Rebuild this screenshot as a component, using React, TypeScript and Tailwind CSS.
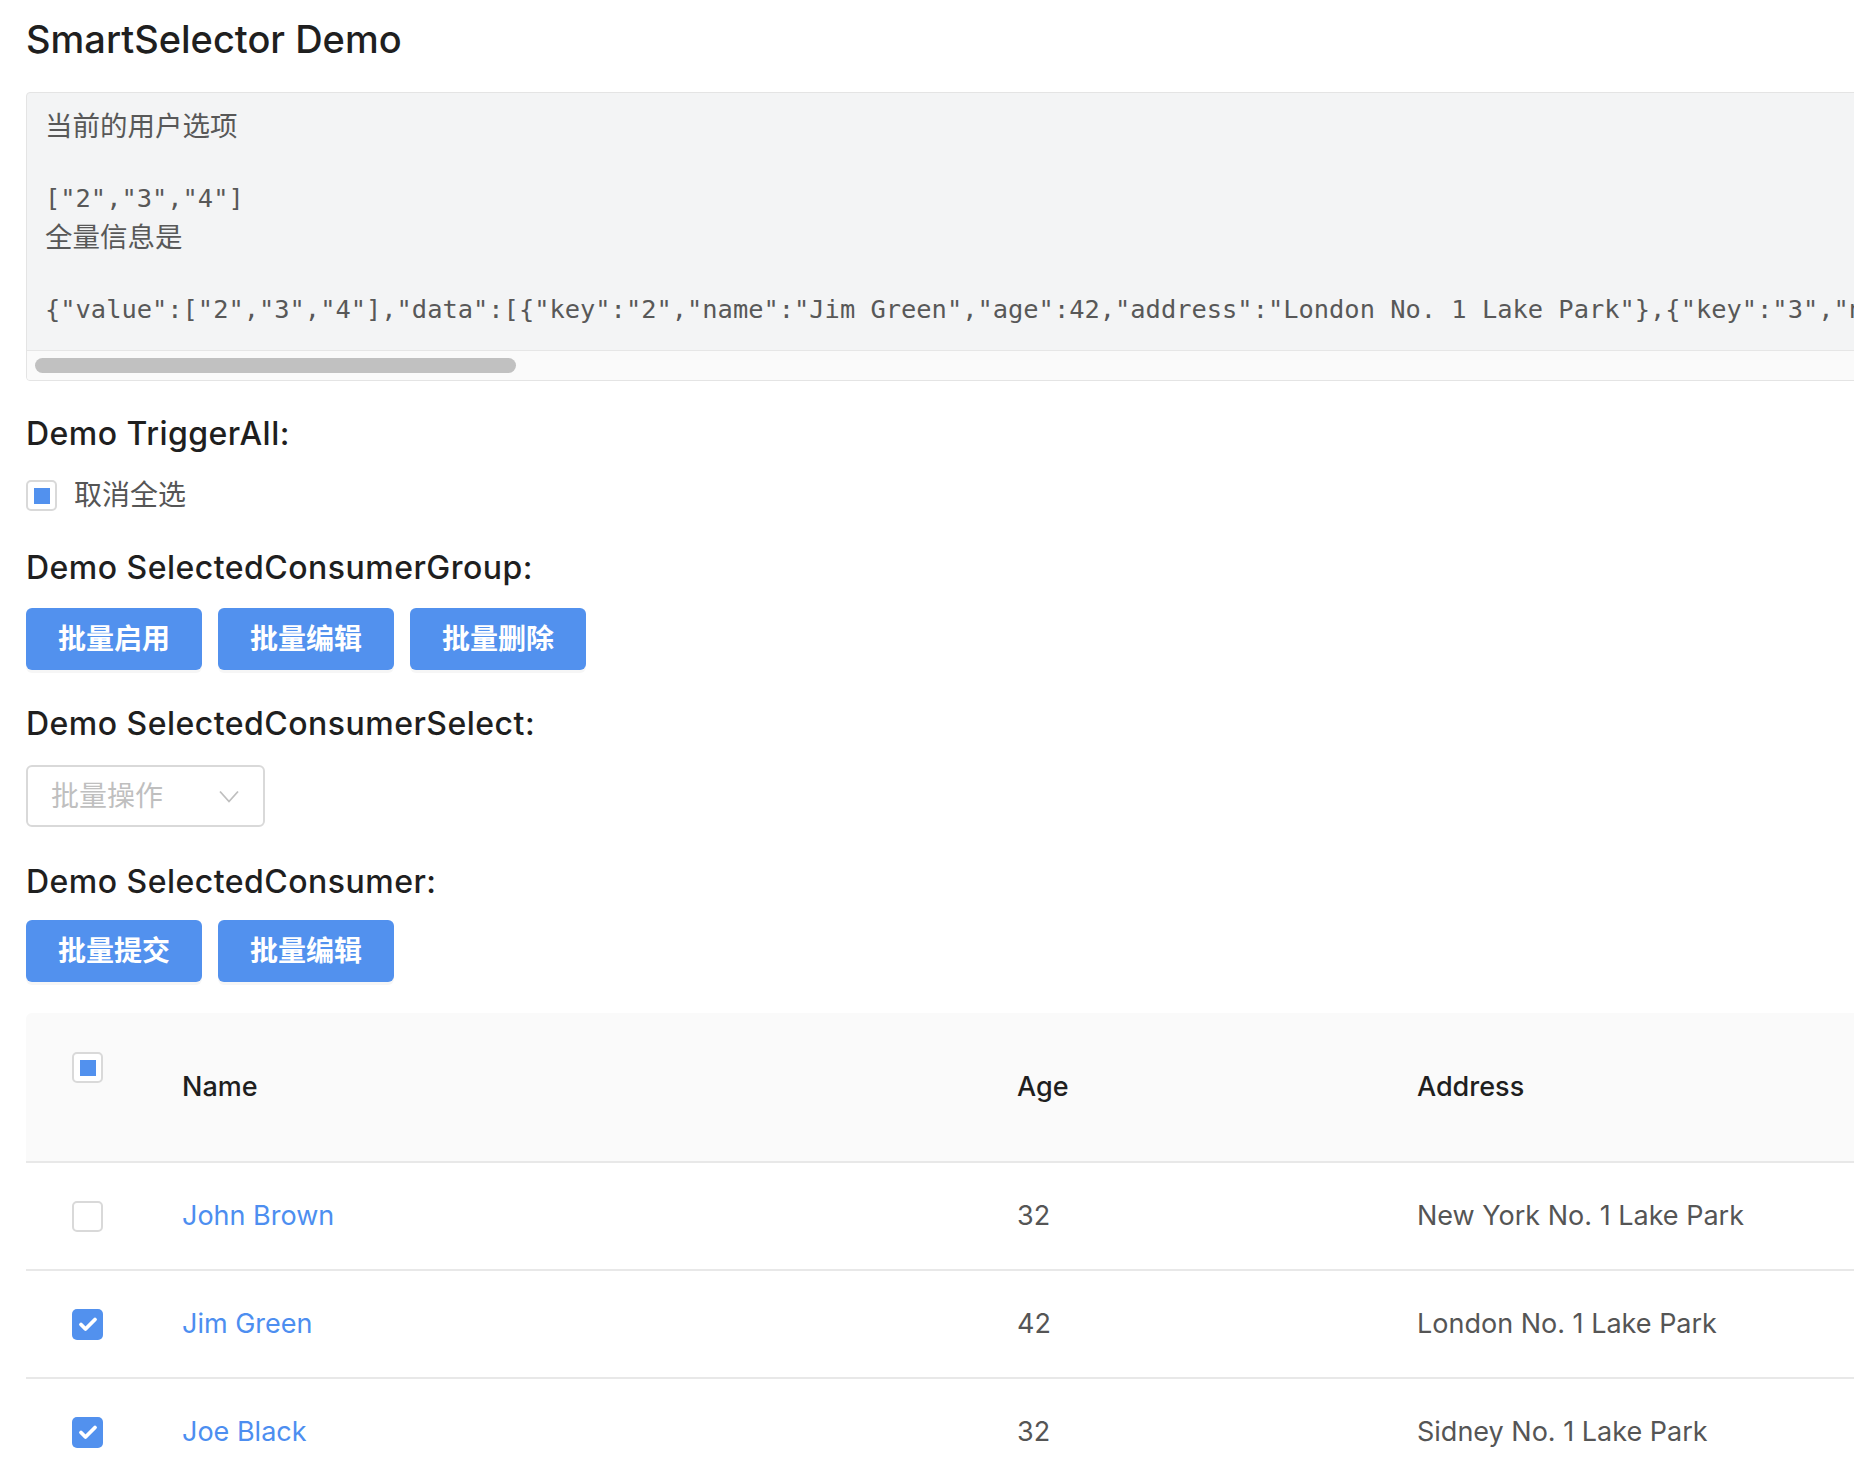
import React from "react";

type CheckState = "none" | "some" | "all";

const rows = [
  { key: "1", name: "John Brown", age: 32, address: "New York No. 1 Lake Park", checked: false },
  { key: "2", name: "Jim Green", age: 42, address: "London No. 1 Lake Park", checked: true },
  { key: "3", name: "Joe Black", age: 32, address: "Sidney No. 1 Lake Park", checked: true },
];

const jsonLine =
  '{"value":["2","3","4"],"data":[{"key":"2","name":"Jim Green","age":42,"address":"London No. 1 Lake Park"},{"key":"3","name":"Joe Black","age":32,"address":"Sidney No. 1 Lake Park"},{"key":"4","name":"Jim Red","age":32,"address":"London No. 2 Lake Park"}]}';

function Check({ state }: { state: CheckState }) {
  if (state === "all") {
    return (
      <span className="flex h-[31px] w-[31px] shrink-0 items-center justify-center rounded-[5px] bg-[#5291ee]">
        <svg width="20" height="16" viewBox="0 0 20 16" fill="none">
          <path
            d="M3 8.5l4.5 4.5L17 3.5"
            stroke="white"
            strokeWidth={3.8}
            strokeLinecap="round"
            strokeLinejoin="round"
          />
        </svg>
      </span>
    );
  }
  return (
    <span className="flex h-[31px] w-[31px] shrink-0 items-center justify-center rounded-[5px] border-2 border-[#d9d9d9] bg-white">
      {state === "some" && <span className="h-[16px] w-[16px] bg-[#5291ee]" />}
    </span>
  );
}

function Heading({ children, className = "" }: { children: React.ReactNode; className?: string }) {
  return (
    <h2 className={`text-[32px] font-medium leading-[40px] tracking-[0.015em] text-[#1f1f1f] ${className}`}>
      {children}
    </h2>
  );
}

function Btn({ children }: { children: React.ReactNode }) {
  return (
    <button className="h-[62px] w-[176px] rounded-[6px] bg-[#5291ee] text-[28px] font-bold text-white shadow-[0_3px_0_rgba(0,0,0,0.035)]">
      {children}
    </button>
  );
}

// one line of the pre block, fixed height so mixed fonts don't grow it
function CodeLine({ children, cjk }: { children?: React.ReactNode; cjk?: boolean }) {
  return (
    <div
      className={`h-[37px] whitespace-pre leading-[37px] ${
        cjk ? "font-['Noto_Sans_CJK_SC',sans-serif] text-[27.5px]" : ""
      }`}
    >
      {children}
    </div>
  );
}

export default function App() {
  return (
    <div className="h-[1482px] overflow-hidden bg-white font-[Inter,'Noto_Sans_CJK_SC',sans-serif]">
      <div className="flex w-[2100px] flex-col pl-[26px] pt-[16px]">
        <h1 className="text-[38px] font-medium leading-[46px] text-[#1f1f1f]">SmartSelector Demo</h1>

        {/* current value */}
        <div className="mt-[30px] overflow-hidden rounded-[4px] border border-[#e4e4e4] bg-[#f3f4f5]">
          <div className="pb-[22px] pl-[18px] pt-[13px] font-['DejaVu_Sans_Mono','Noto_Sans_CJK_SC',monospace] text-[25.4px] text-[#585858]">
            <CodeLine cjk>当前的用户选项</CodeLine>
            <CodeLine />
            <CodeLine>{'["2","3","4"]'}</CodeLine>
            <CodeLine cjk>全量信息是</CodeLine>
            <CodeLine />
            <CodeLine>{jsonLine}</CodeLine>
          </div>
          <div className="flex h-[30px] items-center border-t border-[#e6e6e6] bg-[#fafafa] pl-[8px]">
            <div className="h-[15px] w-[481px] rounded-full bg-[#c1c1c1]" />
          </div>
        </div>

        <Heading className="mt-[33px]">Demo TriggerAll:</Heading>
        <label className="mt-[26px] flex items-center gap-[17px]">
          <Check state="some" />
          <span className="text-[28px] leading-[31px] text-[#555]">取消全选</span>
        </label>

        <Heading className="mt-[37px]">Demo SelectedConsumerGroup:</Heading>
        <div className="mt-[20px] flex gap-[16px]">
          <Btn>批量启用</Btn>
          <Btn>批量编辑</Btn>
          <Btn>批量删除</Btn>
        </div>

        <Heading className="mt-[34px]">Demo SelectedConsumerSelect:</Heading>
        <div className="mt-[21px] flex h-[62px] w-[239px] items-center justify-between rounded-[6px] border-2 border-[#d9d9d9] bg-white pl-[23px] pr-[24px]">
          <span className="text-[28px] text-[#bfbfbf]">批量操作</span>
          <svg width="20" height="13" viewBox="0 0 20 13" fill="none">
            <path d="M1 1.5l9 10 9-10" stroke="#bfbfbf" strokeWidth={1.8} />
          </svg>
        </div>

        <Heading className="mt-[35px]">Demo SelectedConsumer:</Heading>
        <div className="mt-[18px] flex gap-[16px]">
          <Btn>批量提交</Btn>
          <Btn>批量编辑</Btn>
        </div>

        {/* table */}
        <div className="mt-[31px] text-[27px]">
          <div className="grid h-[150px] grid-cols-[156px_835px_400px_1fr] rounded-t-[6px] border-b-2 border-[#e8e8e8] bg-[#fafafa] font-medium text-[#1f1f1f]">
            <div className="pl-[46px] pt-[39px]">
              <Check state="some" />
            </div>
            <div className="flex items-center">Name</div>
            <div className="flex items-center">Age</div>
            <div className="flex items-center">Address</div>
          </div>
          {rows.map((r) => (
            <div
              key={r.key}
              className="grid h-[108px] grid-cols-[156px_835px_400px_1fr] border-b-2 border-[#e8e8e8] text-[#555]"
            >
              <div className="flex items-center pl-[46px]">
                <Check state={r.checked ? "all" : "none"} />
              </div>
              <div className="flex items-center">
                <a className="cursor-pointer text-[#4d8ef0]">{r.name}</a>
              </div>
              <div className="flex items-center">{r.age}</div>
              <div className="flex items-center">{r.address}</div>
            </div>
          ))}
        </div>
      </div>
    </div>
  );
}
